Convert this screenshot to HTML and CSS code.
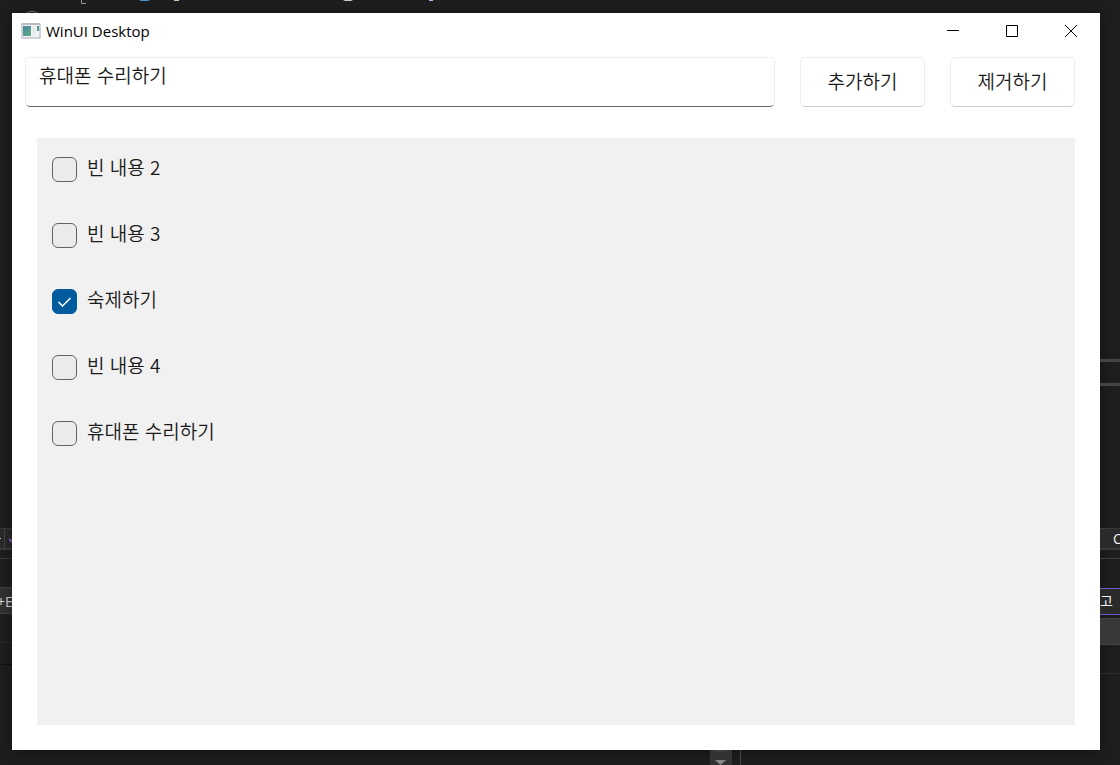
FILE: index.html
```
<!DOCTYPE html>
<html lang="ko">
<head>
    <meta charset="UTF-8">
    <meta name="viewport" content="width=device-width, initial-scale=1.0">
    <title>WinUI Desktop</title>
    <link rel="stylesheet" href="styles.css">
</head>
<body>
    <div class="desktop">
        <!-- editor behind the window -->
        <div class="edge edge-top">
            <svg width="560" height="13" aria-hidden="true">
                <path d="M77.500 0V3.500H82" transform="translate(4 0)" fill="none" stroke="#9a9a9a"/>
                <path d="M27 12.500Q32 10 37 12.500" fill="none" stroke="#777"/>
                <path d="M139 0H150L148 1H141Z" fill="#4e94ce"/>
                <path d="M174 0H179V1H174Z" fill="#d8c8a8"/>
                <path d="M343 0H353L351 1H345Z" fill="#d0d0d0"/>
                <path d="M429 0H433V1H429Z" fill="#b8b8e8"/>
            </svg>
        </div>

        <div class="edge edge-left">
            <div class="edge-tab">
                <svg width="12" height="20" aria-hidden="true">
                    <path d="M0 9.500H1" stroke="#ccc"/>
                    <path d="M4.500 0V20" stroke="#444"/>
                    <path d="M9 9L12 11V14L9 12Z" fill="#7a52b8"/>
                </svg>
            </div>
            <div class="edge-line"></div>
            <div class="edge-field"><span>+E</span></div>
            <div class="edge-rows"></div>
        </div>

        <div class="window">
            <div class="titlebar">
                <svg class="app-icon" width="20" height="16" viewBox="0 0 20 16" aria-hidden="true">
                    <defs>
                        <linearGradient id="pane" x1="0" y1="0" x2="1" y2="1">
                            <stop offset="0" stop-color="#4a86a8"/>
                            <stop offset="1" stop-color="#5fae7c"/>
                        </linearGradient>
                    </defs>
                    <rect x="1" y="1" width="18" height="14" fill="#f4f5f7" stroke="#a4a8b0"/>
                    <path d="M1 1H19" stroke="#b8bcc4" stroke-width="2"/>
                    <rect x="2" y="3" width="8" height="10" fill="url(#pane)"/>
                    <rect x="11" y="3" width="4" height="10" fill="#e8eaec"/>
                    <path d="M17 3V8" stroke="#4f9a94" stroke-width="2"/>
                </svg>
                <span class="title">WinUI Desktop</span>
                <div class="window-controls">
                    <button type="button" aria-label="최소화">
                        <svg width="12" height="12"><path d="M0 5.500H12" stroke="#000" fill="none"/></svg>
                    </button>
                    <button type="button" aria-label="최대화">
                        <svg width="12" height="12"><path d="M.5 .5H11.500V11.500H.5Z" stroke="#000" fill="none"/></svg>
                    </button>
                    <button type="button" aria-label="닫기">
                        <svg width="12" height="12"><path d="M0 0L12 12M12 0L0 12" stroke="#000" fill="none"/></svg>
                    </button>
                </div>
            </div>

            <form class="toolbar">
                <input type="text" class="todo-input" aria-label="할 일" value="휴대폰 수리하기">
                <button type="button" class="btn">추가하기</button>
                <button type="button" class="btn">제거하기</button>
            </form>

            <div class="todo-list">
                <label class="todo"><input type="checkbox"><span>빈 내용 2</span></label>
                <label class="todo"><input type="checkbox"><span>빈 내용 3</span></label>
                <label class="todo"><input type="checkbox" checked><span>숙제하기</span></label>
                <label class="todo"><input type="checkbox"><span>빈 내용 4</span></label>
                <label class="todo"><input type="checkbox"><span>휴대폰 수리하기</span></label>
            </div>
        </div>

        <div class="edge edge-right">
            <div class="edge-bars"></div>
            <div class="edge-tab"><span>C</span></div>
            <div class="edge-line"></div>
            <div class="edge-active"><span>고</span></div>
            <div class="edge-panel"></div>
            <div class="edge-rows"></div>
        </div>

        <div class="edge edge-bottom">
            <div class="scroll-corner">
                <svg width="22" height="15" aria-hidden="true">
                    <path d="M5 1H16" stroke="#444"/>
                    <path d="M5 10H16L10.500 15Z" fill="#888"/>
                </svg>
            </div>
        </div>
    </div>
</body>
</html>
```
FILE: styles.css
```
* {
    box-sizing: border-box;
}
body {
    margin: 0;
    background-color: #1e1e1e;
    color: #1a1a1a;
    font-family: "Open Sans", "Noto Sans CJK KR", sans-serif;
}
svg {
    display: block;
}

.desktop {
    display: grid;
    grid-template-columns: 12px 1fr 20px;
    grid-template-rows: 13px 1fr 15px;
    min-height: 100vh;
    overflow: hidden;
}

/* editor edges */
.edge {
    overflow: hidden;
    color: #f0f0f0;
    font-size: 14px;
    white-space: nowrap;
}
.edge-top,
.edge-bottom {
    grid-column: 1 / -1;
}
.edge-left {
    padding-top: 515px;
}
.edge-right {
    padding-top: 346px;
}
.edge-bars {
    height: 27px;
    margin-bottom: 142px;
    border-top: 3px solid #444;
    border-bottom: 3px solid #444;
}
.edge-tab {
    height: 22px;
    border-top: 1px solid #3a3a3a;
    border-bottom: 2px solid #3a3a3a;
    background-color: #2a2a2a;
    line-height: 20px;
}
.edge-right .edge-tab {
    padding-left: 13px;
}
.edge-line {
    height: 1px;
    margin-top: 8px;
    background-color: #3a3a3a;
}
.edge-field {
    height: 27px;
    margin-top: 28px;
    border-top: 1px solid #444;
    border-bottom: 1px solid #444;
    background-color: #333;
    color: #d8d8d8;
    line-height: 27px;
}
.edge-field span {
    margin-left: -3px;
}
.edge-active {
    height: 27px;
    margin-top: 29px;
    border-top: 1px solid #6a5acd;
    border-bottom: 1px solid #6a5acd;
    background-color: #2a2a2a;
    line-height: 24px;
}
.edge-panel {
    height: 27px;
    margin-top: 3px;
    border-top: 1px solid #444;
    border-bottom: 1px solid #444;
    background-color: #383838;
}
.edge-rows {
    height: 23px;
    margin-top: 28px;
    border-top: 1px solid #2c2c2c;
    border-bottom: 1px solid #101010;
}
.edge-right .edge-rows {
    border-bottom: none;
}
.scroll-corner {
    width: 31px;
    margin-left: 710px;
    border-right: 1px solid #444;
}
.scroll-corner svg {
    background-color: #333;
}

/* window */
.window {
    display: flex;
    flex-direction: column;
    min-width: 0;
    padding: 0 25px 25px 13px;
    background-color: #fff;
    box-shadow: 0 2px 14px rgba(0, 0, 0, 0.4);
}
.titlebar {
    display: flex;
    align-items: center;
    height: 36px;
    margin: 0 -25px 8px -4px;
    color: #000;
    font-size: 15px;
}
.title {
    margin-left: 5px;
}
.window-controls {
    display: flex;
    height: 100%;
    margin-left: auto;
}
.window-controls button {
    display: flex;
    align-items: center;
    justify-content: center;
    width: 59px;
    padding: 0;
    border: none;
    background: none;
}

.toolbar {
    display: flex;
    gap: 25px;
}
.todo-input,
.btn {
    height: 50px;
    border: 1px solid #ededed;
    border-radius: 5px;
    background-color: #fff;
    color: #1a1a1a;
    font-family: "Noto Sans CJK KR", sans-serif;
    font-size: 19px;
    font-weight: 350;
}
.todo-input {
    flex: 1;
    min-width: 0;
    padding: 0 13px 16px;
    border-bottom-color: #666;
    outline: none;
}
.btn {
    width: 125px;
    padding: 0 0 4px;
    border-bottom-color: #ccc;
}

.todo-list {
    display: flex;
    flex: 1;
    flex-direction: column;
    gap: 17px;
    margin: 31px 0 0 12px;
    padding: 7px 15px;
    background-color: #f1f1f1;
}
.todo {
    display: flex;
    align-items: center;
    gap: 10px;
    height: 49px;
    font-family: "Noto Sans CJK KR", sans-serif;
    font-size: 19px;
    font-weight: 350;
}
.todo span {
    padding-bottom: 6px;
}
.todo input {
    appearance: none;
    width: 25px;
    height: 25px;
    margin: 0;
    border: 1px solid #636363;
    border-radius: 6px;
    background-color: #ebebeb;
}
.todo input:checked {
    border-color: #005a9e;
    background: #005a9e url("data:image/svg+xml,%3Csvg xmlns='http://www.w3.org/2000/svg' width='15' height='12'%3E%3Cpath d='M1.500 6L5.500 10L13.500 2' fill='none' stroke='white' stroke-width='1.500'/%3E%3C/svg%3E") center no-repeat;
}
```
